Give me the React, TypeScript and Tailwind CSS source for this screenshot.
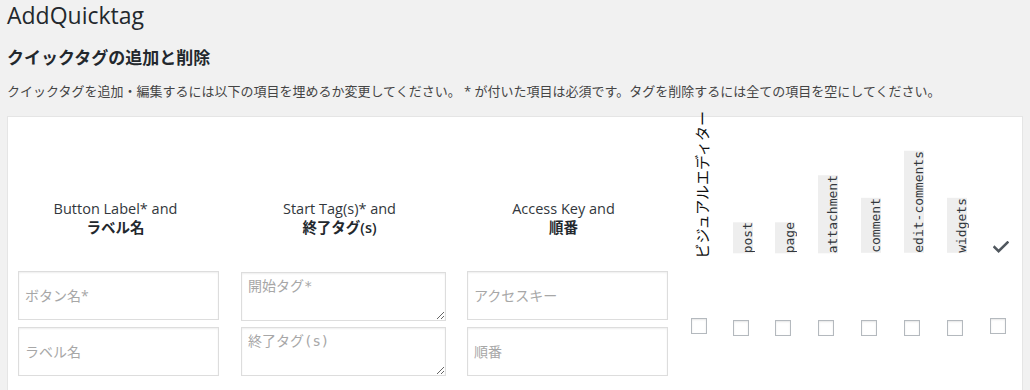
import React from "react";

const cols = [
  { w: 42, label: "ビジュアルエディター", kind: "jp" },
  { w: 42, label: "post", kind: "code" },
  { w: 43, label: "page", kind: "code" },
  { w: 43, label: "attachment", kind: "code" },
  { w: 43, label: "comment", kind: "code" },
  { w: 43, label: "edit-comments", kind: "code" },
  { w: 43, label: "widgets", kind: "code" },
  { w: 45, label: "", kind: "check" },
];

function CheckBox({ top }: { top: number }) {
  return (
    <div
      className="w-[16px] h-[16px] border border-[#b4b9be] bg-white shadow-[inset_0_1px_2px_rgba(0,0,0,0.1)]"
      style={{ marginTop: top }}
    />
  );
}

const inputCls =
  "w-[201px] h-[49px] border border-[#dddddd] bg-white px-[6px] text-[14px] text-[#32373c] placeholder:text-[#a7a7a7] shadow-[inset_0_1px_2px_rgba(0,0,0,0.07)] outline-none";
const taCls =
  "block w-[205px] h-[49px] border border-[#dddddd] bg-white px-[6px] py-[4px] text-[14px] leading-[18px] font-['DejaVu_Sans_Mono','Noto_Sans_CJK_JP',monospace] text-[#32373c] placeholder:text-[#a7a7a7] shadow-[inset_0_1px_2px_rgba(0,0,0,0.07)] outline-none";

export default function App() {
  return (
    <div className="min-h-[390px] bg-[#f1f1f1] font-['Open_Sans','Noto_Sans_CJK_JP',sans-serif] text-[#444] overflow-hidden">
      <div className="pl-[7px]">
        <h1 className="text-[23px] leading-[29px] font-normal text-[#23282d] pt-[1px]">AddQuicktag</h1>
        <h2 className="mt-[17px] text-[17px] leading-[22px] font-bold text-[#23282d]">クイックタグの追加と削除</h2>
        <p className="mt-[12px] text-[13px] leading-[20px] text-[#444] whitespace-nowrap">
          クイックタグを追加・編集するには以下の項目を埋めるか変更してください。 * が付いた項目は必須です。タグを削除するには全ての項目を空にしてください。
        </p>
      </div>
      <div className="ml-[7px] mt-[15px] w-[1016px] h-[300px] bg-white border border-[#e5e5e5]">
        {/* header row */}
        <div className="flex h-[146px] items-end">
          <div className="w-[222px] pb-[26px] pr-[7px] text-center text-[14.5px] leading-[19px] text-[#32373c]">
            <div>Button Label* and</div>
            <div className="font-semibold text-[#23282d]">ラベル名</div>
          </div>
          <div className="w-[226px] pb-[26px] pr-[7px] text-center text-[14.5px] leading-[19px] text-[#32373c]">
            <div>Start Tag(s)* and</div>
            <div className="font-semibold text-[#23282d]">終了タグ(s)</div>
          </div>
          <div className="w-[222px] pb-[26px] pr-[7px] text-center text-[14.5px] leading-[19px] text-[#32373c]">
            <div>Access Key and</div>
            <div className="font-semibold text-[#23282d]">順番</div>
          </div>
          {cols.map((c, i) => (
            <div key={i} className="flex items-end h-full" style={{ width: c.w }}>
              {c.kind === "jp" && (
                <div className="ml-[16px] mb-[5px] text-[15px] leading-[15px] text-[#111] [writing-mode:vertical-rl] [text-orientation:sideways] rotate-180 whitespace-nowrap font-['Noto_Sans_CJK_JP',sans-serif]">
                  {c.label}
                </div>
              )}
              {c.kind === "code" && (
                <code className="ml-[13px] mb-[10px] w-[20px] py-[5px] bg-[#eeeeee] text-[#32373c] text-[13px] leading-[20px] font-['DejaVu_Sans_Mono',monospace] [writing-mode:vertical-rl] rotate-180 whitespace-nowrap text-center">
                  {c.label}
                </code>
              )}
              {c.kind === "check" && (
                <svg className="ml-[16px] mb-[10px]" width="16" height="12" viewBox="0 0 16 12">
                  <path d="M1.5 6.2 L5.6 10.2 L14.5 1.5" fill="none" stroke="#50575e" strokeWidth="2.6" strokeLinecap="square" />
                </svg>
              )}
            </div>
          ))}
        </div>
        {/* input row */}
        <div className="flex pt-[8px]">
          <div className="w-[222px] pl-[10px] flex flex-col gap-[7px]">
            <input placeholder="ボタン名*" className={inputCls} />
            <input placeholder="ラベル名" className={inputCls} />
          </div>
          <div className="w-[226px] pl-[11px] pt-[1px] flex flex-col gap-[6px]">
            <textarea placeholder="開始タグ*" className={taCls} />
            <textarea placeholder="終了タグ(s)" className={taCls} />
          </div>
          <div className="w-[222px] pl-[11px] flex flex-col gap-[7px]">
            <input placeholder="アクセスキー" className={inputCls} />
            <input placeholder="順番" className={inputCls} />
          </div>
          {cols.map((c, i) => (
            <div key={i} className="pl-[13px]" style={{ width: c.w }}>
              <CheckBox top={i === 0 || i === cols.length - 1 ? 47 : 49} />
            </div>
          ))}
        </div>
      </div>
    </div>
  );
}
